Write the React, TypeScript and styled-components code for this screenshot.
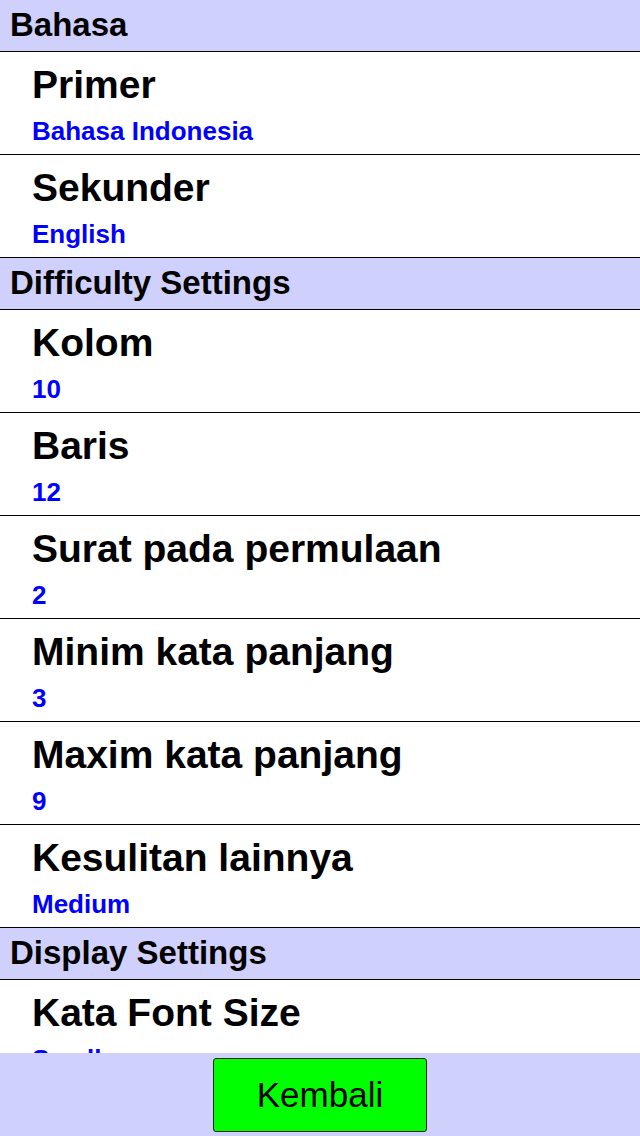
import styled, { createGlobalStyle } from "styled-components"

const Global = createGlobalStyle`
  html, body {
    margin: 0;
    padding: 0;
    background: #ffffff;
    font-family: "Liberation Sans", Arial, sans-serif;
  }
`

const Screen = styled.div`
  width: 640px;
  height: 1136px;
  display: flex;
  flex-direction: column;
  overflow: hidden;
`

const List = styled.div`
  flex: 1;
  overflow: hidden;
`

const SectionHeader = styled.div`
  height: 52px;
  box-sizing: border-box;
  padding: 8px 0 0 10px;
  background: #d0d0fc;
  border-bottom: 1px solid #000;
  font-size: 33px;
  line-height: 1;
  font-weight: bold;
  color: #000;
`

const Item = styled.div`
  height: 103px;
  box-sizing: border-box;
  padding-left: 32px;
  border-bottom: 1px solid #000;
  display: flex;
  flex-direction: column;
`

const Title = styled.div`
  margin-top: 13px;
  font-size: 39px;
  line-height: 1;
  font-weight: bold;
  color: #000;
  white-space: nowrap;
`

const Value = styled.div`
  margin-top: 14px;
  font-size: 26px;
  line-height: 1;
  font-weight: bold;
  color: #0000ff;
`

const Footer = styled.div`
  height: 83px;
  flex-shrink: 0;
  background: #d0d0fc;
  display: flex;
  justify-content: center;
  padding-top: 5px;
  box-sizing: border-box;
`

const BackButton = styled.button`
  width: 214px;
  height: 74px;
  background: #00ff00;
  border: 1px solid #222;
  border-radius: 3px;
  font-family: "Liberation Sans", Arial, sans-serif;
  font-size: 35px;
  color: #000;
  padding: 0;
  cursor: pointer;
`

type Setting = { title: string; value: string }
type Section = { name: string; items: Setting[] }

const sections: Section[] = [
  {
    name: "Bahasa",
    items: [
      { title: "Primer", value: "Bahasa Indonesia" },
      { title: "Sekunder", value: "English" },
    ],
  },
  {
    name: "Difficulty Settings",
    items: [
      { title: "Kolom", value: "10" },
      { title: "Baris", value: "12" },
      { title: "Surat pada permulaan", value: "2" },
      { title: "Minim kata panjang", value: "3" },
      { title: "Maxim kata panjang", value: "9" },
      { title: "Kesulitan lainnya", value: "Medium" },
    ],
  },
  {
    name: "Display Settings",
    items: [{ title: "Kata Font Size", value: "Small" }],
  },
]

export default function App() {
  return (
    <Screen>
      <Global />
      <List>
        {sections.map((s) => (
          <div key={s.name}>
            <SectionHeader>{s.name}</SectionHeader>
            {s.items.map((it) => (
              <Item key={it.title}>
                <Title>{it.title}</Title>
                <Value>{it.value}</Value>
              </Item>
            ))}
          </div>
        ))}
      </List>
      <Footer>
        <BackButton>Kembali</BackButton>
      </Footer>
    </Screen>
  )
}
